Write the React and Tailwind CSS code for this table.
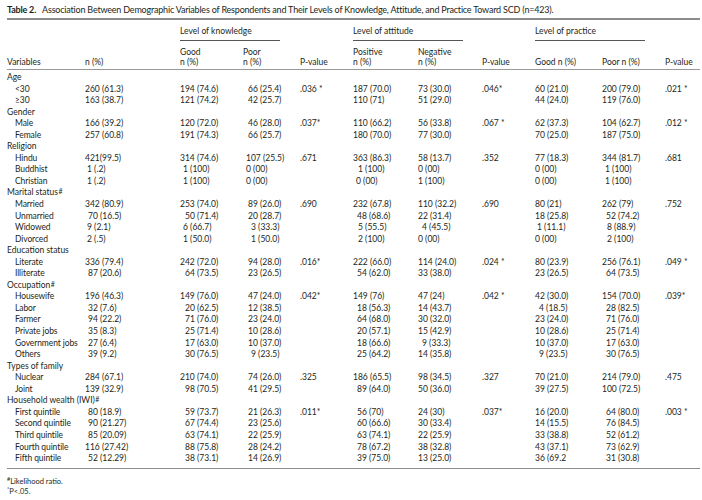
import React from "react";

const COLS = "grid grid-cols-[78px_95px_63px_57px_53px_65px_64px_53px_67px_63px_1fr]";

const rows = [
  ["Age"],
  ["<30", "260 (61.3)", "194 (74.6)", "66 (25.4)", ".036 *", "187 (70.0)", "73 (30.0)", ".046*", "60 (21.0)", "200 (79.0)", ".021 *"],
  ["≥30", "163 (38.7)", "121 (74.2)", "42 (25.7)", "", "110 (71)", "51 (29.0)", "", "44 (24.0)", "119 (76.0)", ""],
  ["Gender"],
  ["Male", "166 (39.2)", "120 (72.0)", "46 (28.0)", ".037*", "110 (66.2)", "56 (33.8)", ".067 *", "62 (37.3)", "104 (62.7)", ".012 *"],
  ["Female", "257 (60.8)", "191 (74.3)", "66 (25.7)", "", "180 (70.0)", "77 (30.0)", "", "70 (25.0)", "187 (75.0)", ""],
  ["Religion"],
  ["Hindu", "421(99.5)", "314 (74.6)", "107 (25.5)", ".671", "363 (86.3)", "58 (13.7)", ".352", "77 (18.3)", "344 (81.7)", ".681"],
  ["Buddhist", "1 (.2)", "1 (100)", "0 (00)", "", "1 (100)", "0 (00)", "", "0 (00)", "1 (100)", ""],
  ["Christian", "1 (.2)", "1 (100)", "0 (00)", "", "0 (00)", "1 (100)", "", "0 (00)", "1 (100)", ""],
  ["Marital status", "#"],
  ["Married", "342 (80.9)", "253 (74.0)", "89 (26.0)", ".690", "232 (67.8)", "110 (32.2)", ".690", "80 (21)", "262 (79)", ".752"],
  ["Unmarried", "70 (16.5)", "50 (71.4)", "20 (28.7)", "", "48 (68.6)", "22 (31.4)", "", "18 (25.8)", "52 (74.2)", ""],
  ["Widowed", "9 (2.1)", "6 (66.7)", "3 (33.3)", "", "5 (55.5)", "4 (45.5)", "", "1 (11.1)", "8 (88.9)", ""],
  ["Divorced", "2 (.5)", "1 (50.0)", "1 (50.0)", "", "2 (100)", "0 (00)", "", "0 (00)", "2 (100)", ""],
  ["Education status"],
  ["Literate", "336 (79.4)", "242 (72.0)", "94 (28.0)", ".016*", "222 (66.0)", "114 (24.0)", ".024 *", "80 (23.9)", "256 (76.1)", ".049 *"],
  ["Illiterate", "87 (20.6)", "64 (73.5)", "23 (26.5)", "", "54 (62.0)", "33 (38.0)", "", "23 (26.5)", "64 (73.5)", ""],
  ["Occupation", "#"],
  ["Housewife", "196 (46.3)", "149 (76.0)", "47 (24.0)", ".042*", "149 (76)", "47 (24)", ".042 *", "42 (30.0)", "154 (70.0)", ".039*"],
  ["Labor", "32 (7.6)", "20 (62.5)", "12 (38.5)", "", "18 (56.3)", "14 (43.7)", "", "4 (18.5)", "28 (82.5)", ""],
  ["Farmer", "94 (22.2)", "71 (76.0)", "23 (24.0)", "", "64 (68.0)", "30 (32.0)", "", "23 (24.0)", "71 (76.0)", ""],
  ["Private jobs", "35 (8.3)", "25 (71.4)", "10 (28.6)", "", "20 (57.1)", "15 (42.9)", "", "10 (28.6)", "25 (71.4)", ""],
  ["Government jobs", "27 (6.4)", "17 (63.0)", "10 (37.0)", "", "18 (66.6)", "9 (33.3)", "", "10 (37.0)", "17 (63.0)", ""],
  ["Others", "39 (9.2)", "30 (76.5)", "9 (23.5)", "", "25 (64.2)", "14 (35.8)", "", "9 (23.5)", "30 (76.5)", ""],
  ["Types of family"],
  ["Nuclear", "284 (67.1)", "210 (74.0)", "74 (26.0)", ".325", "186 (65.5)", "98 (34.5)", ".327", "70 (21.0)", "214 (79.0)", ".475"],
  ["Joint", "139 (32.9)", "98 (70.5)", "41 (29.5)", "", "89 (64.0)", "50 (36.0)", "", "39 (27.5)", "100 (72.5)", ""],
  ["Household wealth (IWI)", "#"],
  ["First quintile", "80 (18.9)", "59 (73.7)", "21 (26.3)", ".011*", "56 (70)", "24 (30)", ".037*", "16 (20.0)", "64 (80.0)", ".003 *"],
  ["Second quintile", "90 (21.27)", "67 (74.4)", "23 (25.6)", "", "60 (66.6)", "30 (33.4)", "", "14 (15.5)", "76 (84.5)", ""],
  ["Third quintile", "85 (20.09)", "63 (74.1)", "22 (25.9)", "", "63 (74.1)", "22 (25.9)", "", "33 (38.8)", "52 (61.2)", ""],
  ["Fourth quintile", "116 (27.42)", "88 (75.8)", "28 (24.2)", "", "78 (67.2)", "38 (32.8)", "", "43 (37.1)", "73 (62.9)", ""],
  ["Fifth quintile", "52 (12.29)", "38 (73.1)", "14 (26.9)", "", "39 (75.0)", "13 (25.0)", "", "36 (69.2", "31 (30.8)", ""],
];

// indents per column index (1..10) by leading digit count [1d, 2d, 3d]
const IND = {
  1: { d: [2, 3, 0] },
  2: { d: [3, 5, 0] },
  3: { d: [8, 5, 3], s: { "0 (00)": 3 } },
  4: { d: [0, 0, 0] },
  5: { d: [5, 4, 0], s: { "0 (00)": 3 } },
  6: { d: [4, 0, 0], s: { "0 (00)": 0, "1 (100)": 0 } },
  7: { d: [0, 0, 0] },
  8: { d: [4, 0, 0], s: { "0 (00)": 0, "1 (11.1)": 2 } },
  9: { d: [5, 4, 0], s: { "1 (100)": 3 } },
  10: { d: [0, 0, 0] },
};

function indent(i, v) {
  const c = IND[i];
  if (!c || !v) return 0;
  if (c.s && c.s[v] !== undefined) return c.s[v];
  const m = v.match(/^\d+/);
  if (!m) return 0;
  const n = Math.min(m[0].length, 3);
  return c.d[n - 1];
}

function Row({ r }) {
  if (r.length <= 2) {
    return (
      <div className="h-[11.55px] leading-[11.55px] whitespace-nowrap">
        {r[0]}
        {r[1] && <sup className="text-[7px] leading-none relative top-[-1px] ml-[0.5px]">{r[1]}</sup>}
      </div>
    );
  }
  return (
    <div className={`${COLS} h-[11.55px] leading-[11.55px] whitespace-nowrap`}>
      <div className="pl-[8px] tracking-[-0.1px]">{r[0]}</div>
      {r.slice(1).map((v, k) => (
        <div key={k} style={{ paddingLeft: indent(k + 1, v) }}>
          {v}
        </div>
      ))}
    </div>
  );
}

export default function App() {
  return (
    <div className="w-[702px] h-[500px] bg-white text-[#231f20] font-['Lato',sans-serif] text-[8.5px] pl-[7px] pr-[2px] overflow-hidden">
      <div className="pt-[4px] h-[18px] text-[9px] leading-[12px] tracking-[-0.2px] whitespace-nowrap">
        <span className="font-bold">Table 2.</span>
        <span className="ml-[6px]">Association Between Demographic Variables of Respondents and Their Levels of Knowledge, Attitude, and Practice Toward SCD (n=423).</span>
      </div>
      <div className="h-[1.5px] bg-[#8c8c8c]" />
      {/* header */}
      <div className={`${COLS} pt-[6px] leading-[10.5px]`}>
        <div className="row-span-3 self-end">Variables</div>
        <div className="row-span-3 self-end">n (%)</div>
        <div className="col-span-2 h-[16px]">
          <div className="w-[100px] h-[15px] border-b border-[#555]">Level of knowledge</div>
        </div>
        <div className="row-span-3 self-end">P-value</div>
        <div className="col-span-2 h-[16px]">
          <div className="w-[110px] h-[15px] border-b border-[#555]">Level of attitude</div>
        </div>
        <div className="row-span-3 self-end">P-value</div>
        <div className="col-span-2 h-[16px]">
          <div className="w-[110px] h-[15px] border-b border-[#555]">Level of practice</div>
        </div>
        <div className="row-span-3 self-end">P-value</div>
        <div className="pt-[5px]">Good</div>
        <div className="pt-[5px]">Poor</div>
        <div className="pt-[5px]">Positive</div>
        <div className="pt-[5px]">Negative</div>
        <div className="row-span-2 self-end">Good n (%)</div>
        <div className="row-span-2 self-end">Poor n (%)</div>
        <div>n (%)</div>
        <div>n (%)</div>
        <div>n (%)</div>
        <div>n (%)</div>
      </div>
      <div className="mt-[1.5px] h-px bg-[#999]" />
      <div className="pt-[2px]">
        {rows.map((r, i) => (
          <Row key={i} r={r} />
        ))}
      </div>
      <div className="mt-[3px] h-[1.5px] bg-[#8c8c8c]" />
      <div className="pt-[8px] text-[7.5px] leading-[9.5px]">
        <div>
          <sup className="text-[5.5px] leading-none">#</sup>Likelihood ratio.
        </div>
        <div>
          <sup className="text-[5.5px] leading-none">*</sup>P&lt;.05.
        </div>
      </div>
    </div>
  );
}
